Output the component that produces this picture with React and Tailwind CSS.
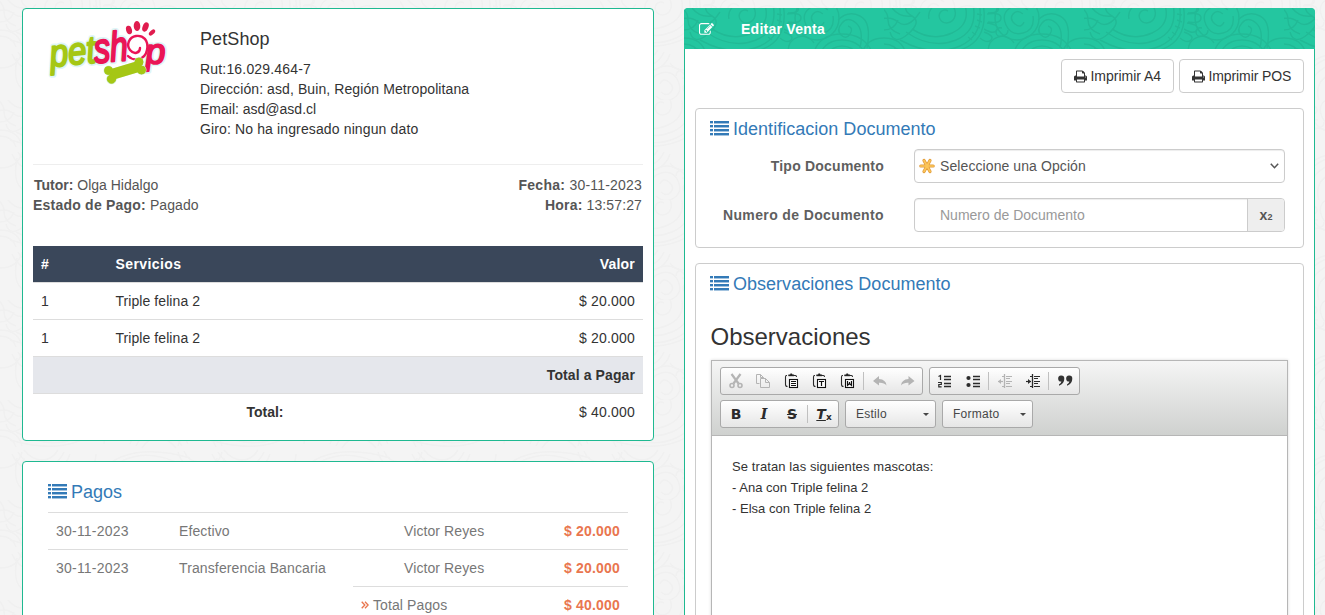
import React from "react";

/* ---------- background ornament ---------- */
const SPIRAL = "M4-3c-5-3-11 2-8 8s13 5 15-3-5-15-13-14-15 9-13 17";

function OrnamentTile() {
  return (
    <>
      {/* large scroll with banded outer rings */}
      <path d={SPIRAL} transform="translate(60 6)" />
      <path d="M80-6q8 22-12 31t-40-4M88-8q8 30-16 40T22 24M94-10q9 36-18 48T16 32M98-10q9 40-19 51T10 40" />
      <path d="M93 6l5 1M93 12l5 2M91 18l5 2M88 24l4 3M84 29l4 3" />
      {/* petals */}
      <path d="M102-2q10-3 12 2t-10 5M103 6q14-2 14 4t-13 4M103 15q13 2 10 7t-13-1M100 24q11 4 7 8t-11-2" />
      {/* double scroll */}
      <circle cx="133" cy="10" r="22" />
      <path d="M144 2q-9-8-18-2t-4 17 17 8 10-17M139 6q-6-5-10 0t2 10 9-2" />
      {/* small scrolls and arches */}
      <path d="M176 40q4-18-4-25t-14 0-1 12 9-1-2-8M183 40q5-26-7-32t-22 4" />
      <path d="M118 20q-6-1-6 4t6 4 6-6M104 44q0-12 10-15t16 6" />
      <path d="M130 44q6-18 28-18t30 18M136 46q6-14 22-14t24 14M142 48q6-10 16-10t18 10" />
      <path d="M-22 46q4-16 22-16t22 16M-16 47q4-11 16-11t16 11M178 46q4-16 22-16t22 16" />
      {/* knot */}
      <path d="M-6-2q10 4 10 14t12 14M24-4q-6 6 4 12t-4 18-18-2M-8 14q12-8 22 0t22-10M8 0q8 10 20 8M0 22q10 0 14-10" />
    </>
  );
}

function Ornament({ id, stroke, width, rotated, className }) {
  return (
    <svg className={className} width="100%" height="100%" aria-hidden="true">
      <defs>
        <pattern id={id} width="200" height={rotated ? 100 : 120} patternUnits="userSpaceOnUse">
          <g fill="none" stroke={stroke} strokeWidth={width}>
            <OrnamentTile />
            {rotated && <g transform="translate(200 98) rotate(180)"><OrnamentTile /></g>}
          </g>
        </pattern>
      </defs>
      <rect width="100%" height="100%" fill={`url(#${id})`} />
    </svg>
  );
}

/* ---------- icons ---------- */
const ListIcon = () => (
  <svg width="19" height="15" viewBox="0 0 19 15" fill="currentColor" shapeRendering="crispEdges" className="-mt-[2px] shrink-0">
    {[0, 4, 8, 12].map((y) => (
      <g key={y}>
        <rect x="0" y={y} width="3" height="2" />
        <rect x="4" y={y} width="15" height="2" />
        <rect x="0" y={y + 2} width="3" height="1" opacity=".35" />
        <rect x="4" y={y + 2} width="15" height="1" opacity=".45" />
      </g>
    ))}
  </svg>
);

const PrintIcon = () => (
  <svg width="13" height="13" viewBox="64 64 1664 1664" fill="currentColor">
    <path d="M448 1536h896v-256h-896v256zm0-640h896v-384h-160q-40 0-68-28t-28-68v-160h-640v640zm1152 64q0-26-19-45t-45-19-45 19-19 45 19 45 45 19 45-19 19-45zm128 0v416q0 13-9.5 22.5t-22.5 9.5h-224v160q0 40-28 68t-68 28h-960q-40 0-68-28t-28-68v-160h-224q-13 0-22.5-9.5t-9.5-22.5v-416q0-79 56.5-135.5t135.5-56.5h64v-544q0-40 28-68t68-28h672q40 0 88 20t76 48l152 152q28 28 48 76t20 88v256h64q79 0 135.5 56.5t56.5 135.5z" />
  </svg>
);

const EditIcon = () => (
  <svg width="15" height="15" viewBox="0 0 1792 1792" fill="currentColor">
    <path d="M888 1184l116-116-152-152-116 116v56h96v96h56zm440-720q-16-16-33 1l-350 350q-17 17-1 33t33-1l350-350q17-17 1-33zm80 594v190q0 119-84.5 203.5t-203.5 84.5h-832q-119 0-203.5-84.5t-84.5-203.5v-832q0-119 84.5-203.5t203.5-84.5h832q63 0 117 25 15 7 18 23 3 17-9 29l-49 49q-14 14-32 8-23-6-45-6h-832q-66 0-113 47t-47 113v832q0 66 47 113t113 47h832q66 0 113-47t47-113v-126q0-13 9-22l64-64q15-15 35-7t20 29zm-96-738l288 288-672 672h-288v-288zm444 132l-92 92-288-288 92-92q28-28 68-28t68 28l152 152q28 28 28 68t-28 68z" />
  </svg>
);

const LogoWord = ({ pet, shop }) => (
  <>
    <text transform="translate(7 53) rotate(-6) scale(1 1.2)" fontSize="32" textLength="46" lengthAdjust="spacingAndGlyphs" fill={pet} stroke={pet}>pet</text>
    <text transform="translate(51 49) rotate(-5) scale(1 1.3)" fontSize="32" textLength="34" lengthAdjust="spacingAndGlyphs" fill={shop} stroke={shop}>sh</text>
    <text transform="translate(102 50) rotate(-3) scale(1 1.1)" fontSize="32" textLength="20" lengthAdjust="spacingAndGlyphs" fill={shop} stroke={shop}>p</text>
  </>
);

const BoneShape = () => (
  <>
    <path d="M66 61L96 52" strokeWidth="11" />
    <circle cx="64.500" cy="56.500" r="4" />
    <circle cx="67.500" cy="65" r="4.200" />
    <circle cx="95" cy="48" r="4" />
    <circle cx="97.500" cy="56" r="4" />
  </>
);

const Logo = () => (
  <svg width="134" height="78" viewBox="0 0 134 78" className="shrink-0">
    <g fontFamily="Liberation Sans, sans-serif" fontStyle="italic" strokeLinejoin="round">
      <g strokeWidth="4.500" opacity=".6"><LogoWord pet="#c9f1f3" shop="#c9f1f3" /></g>
      <g strokeWidth="1.700"><LogoWord pet="#a5c715" shop="#ea1556" /></g>
    </g>
    <path d="M84 42c6 6 17 4 19-6s-4-15-11-14-10 9-6 14 10 3 10-2" fill="none" stroke="#ea1556" strokeWidth="2.400" strokeLinecap="round" />
    <g fill="#e01c4e">
      <ellipse cx="85" cy="16" rx="2.900" ry="4.300" transform="rotate(-16 85 16)" />
      <ellipse cx="93" cy="12" rx="3.300" ry="5" transform="rotate(-4 93 12)" />
      <ellipse cx="101.500" cy="13" rx="2.900" ry="4.800" transform="rotate(22 101.500 13)" />
      <ellipse cx="108" cy="18.500" rx="2.100" ry="3.800" transform="rotate(48 108 18.500)" />
    </g>
    <g fill="#d3f1dc" stroke="#d3f1dc" strokeWidth="2"><BoneShape /></g>
    <g fill="#a5c715" stroke="#a5c715" strokeWidth="1"><BoneShape /></g>
  </svg>
);

const StarIcon = () => (
  <svg width="16" height="16" viewBox="0 0 16 16" className="shrink-0">
    <g strokeLinecap="round">
      <path d="M8 8L5 2.500M8 8L11 2.500M8 8H1.800M8 8H14.200M8 8L5 13.500M8 8L11 13.500" stroke="#e09a3a" strokeWidth="3.200" />
      <path d="M8 8L5 2.500M8 8L11 2.500M8 8H1.800M8 8H14.200M8 8L5 13.500M8 8L11 13.500" stroke="#fcc658" strokeWidth="1.700" />
    </g>
  </svg>
);

/* toolbar glyphs, all on a 16px grid */
const Icon = ({ children, dim, fill = "none" }) => (
  <span className="flex h-[26px] w-[28px] items-center justify-center">
    <svg width="16" height="16" viewBox="0 0 16 16" fill={fill} stroke={dim ? "#b4b4b4" : "#2b2b2b"} strokeWidth="1.200">
      {children}
    </svg>
  </span>
);
const Sep = () => <span className="mr-[2px] ml-px h-[18px] w-px bg-[#c0c0c0]" />;

const Cut = () => (
  <Icon dim>
    <path d="M3.500 1L10.500 10.500M12.500 1L5.500 10.500" strokeWidth="2.200" />
    <circle cx="4" cy="12.500" r="2" strokeWidth="1.600" />
    <circle cx="12" cy="12.500" r="2" strokeWidth="1.600" />
  </Icon>
);
const Copy = () => (
  <Icon dim>
    <g transform="translate(-2 0)">
      <path d="M5.500 10.500H2.500V1.500H6.500L9.500 4.500V5.500M6.500 1.500V4.500H9.500M6.500 5.500H11.500L15.500 9.500V14.500H6.500ZM11.500 5.500V9.500H15.500" strokeWidth="1" />
    </g>
  </Icon>
);
const Clip = ({ children }) => (
  <Icon>
    <g transform="translate(-1 0)">
      <path d="M4 2.500H3.500Q2.500 2.500 2.500 4V11.500Q2.500 13.500 4.500 13.500M11 2.500H12.500Q13.500 2.500 13.500 4" strokeWidth="1.100" />
      <path d="M5.500 3V1.800H7L7.500 .8H9L9.500 1.800H11V3Z" fill="#222" strokeWidth=".4" />
      <rect x="6.500" y="6.500" width="8" height="8" fill="#fff" stroke="#111" strokeWidth="1.100" />
      {children}
    </g>
  </Icon>
);
const Undo = ({ flip }) => (
  <Icon dim fill="#b4b4b4">
    <path d="M1 8L7 3V6Q14 6.500 14.500 12.500Q12 9.500 7 9.800V12.500Z" stroke="none" transform={flip ? "translate(15.500 0) scale(-1 1)" : undefined} />
  </Icon>
);
const Numbered = () => (
  <Icon>
    <path d="M7 3.500H14M7 6.500H14M7 10.500H14M7 13.500H14" strokeWidth="1.300" />
    <path d="M1.500 3.500L3.500 2.500V7M1 9.500H4.300V11.500H1.800V13.800H4.600" />
  </Icon>
);
const Bulleted = () => (
  <Icon>
    <path d="M8 3.500H15M8 6.500H15M8 10.500H15M8 13.500H15" strokeWidth="1.300" />
    <circle cx="3.500" cy="5" r="2.100" fill="#2b2b2b" stroke="none" />
    <circle cx="3.500" cy="12" r="2.100" fill="#2b2b2b" stroke="none" />
  </Icon>
);
const Indent = ({ out }) => (
  <Icon dim={out}>
    <path d="M7.500 1V15" strokeWidth="1.300" />
    <path d="M9 3.500H15M9 5.500H13M9 8.500H15M9 10.500H13M9 13.500H15" />
    <path d="M5 3.500H7M5 13.500H7" />
    <path d="M1 8.500H6" />
    <path d={out ? "M4 6L1 8.500L4 11Z" : "M3 6L6 8.500L3 11Z"} fill={out ? "#b4b4b4" : "#2b2b2b"} stroke="none" />
  </Icon>
);
const Quote = () => (
  <Icon fill="#333">
    <path d="M4 2.500a3.200 3.200 0 0 1 3.300 3.300q0 5-5.300 7v-1.300q2.300-1.300 2.400-2.900A3 3 0 0 1 4 2.500zM12 2.500a3.200 3.200 0 0 1 3.300 3.300q0 5-5.300 7v-1.300q2.300-1.300 2.400-2.900A3 3 0 0 1 12 2.500z" stroke="none" />
  </Icon>
);

const ToolGroup = ({ children }) => (
  <div className="flex h-[28px] items-center rounded-[3px] border border-[#a9a9a9] bg-linear-to-b from-white to-[#e6e6e6] pl-[1px]">{children}</div>
);
const Combo = ({ children }) => (
  <div className="flex h-[28px] w-[91px] items-center justify-between rounded-[3px] border border-[#a9a9a9] bg-linear-to-b from-white to-[#e6e6e6] pr-[6px] pl-[10px] text-[12px] tracking-[.25px] text-[#474747]">
    {children}
    <svg width="6" height="3" viewBox="0 0 6 3" fill="#474747"><path d="M0 0h6L3 3z" /></svg>
  </div>
);

/* ---------- pieces ---------- */
const SectionTitle = ({ children }) => (
  <h4 className="flex h-[20px] items-center gap-[4px] text-[18px] leading-[20px] text-[#337ab7]">
    <ListIcon />
    <span className="tracking-[.02px]">{children}</span>
  </h4>
);

const PrintButton = ({ children, className }) => (
  <button className={`flex h-[34px] items-center gap-[3.500px] rounded-[4px] border border-[#ccc] bg-white pl-[12px] text-[14px] text-[#333] ${className}`}>
    <PrintIcon />
    {children}
  </button>
);

const services = [
  ["1", "Triple felina 2", "$ 20.000"],
  ["1", "Triple felina 2", "$ 20.000"],
];
const payments = [
  ["30-11-2023", "Efectivo", "Victor Reyes", "$ 20.000"],
  ["30-11-2023", "Transferencia Bancaria", "Victor Reyes", "$ 20.000"],
];

function Receipt() {
  return (
    <section className="h-[433px] rounded-[4px] border border-[#1fb991] bg-white px-[10px]">
      <header className="flex h-[156px] border-b border-[#eee] text-[#333]">
        <div className="w-[167px] pt-[5px] pl-[11px]"><Logo /></div>
        <div className="pt-[20px] text-[14px] leading-[20px] tracking-[.09px]">
          <h4 className="mb-[10px] text-[18px] leading-[20px]">PetShop</h4>
          <p className="tracking-[.18px]">Rut:16.029.464-7</p>
          <p>Dirección: asd, Buin, Región Metropolitana</p>
          <p className="tracking-[0]">Email: asd@asd.cl</p>
          <p className="tracking-[.13px]">Giro: No ha ingresado ningun dato</p>
        </div>
      </header>
      <div className="flex h-[81px] justify-between pt-[10px] pr-[1px] text-[14px] leading-[20px] text-[#555]">
        <div>
          <p className="pl-px"><b>Tutor:</b> Olga Hidalgo</p>
          <p className="tracking-[.08px]"><b className="tracking-[.22px]">Estado de Pago:</b> Pagado</p>
        </div>
        <div className="text-right">
          <p className="tracking-[.2px]"><b className="tracking-[.3px]">Fecha:</b> 30-11-2023</p>
          <p className="tracking-[.12px]"><b className="tracking-[.2px]">Hora:</b> 13:57:27</p>
        </div>
      </div>
      <div className="text-[14px] leading-[20px] text-[#333]">
        <div className="flex h-[36px] items-center bg-[#3a475a] px-[8px] font-bold text-white">
          <span className="w-[74.500px]">#</span>
          <span className="flex-1 tracking-[.4px]">Servicios</span>
          <span className="tracking-[.2px]">Valor</span>
        </div>
        {services.map((row, i) => (
          <div key={i} className="flex h-[37px] items-center border-t border-[#ddd] px-[8px]">
            <span className="w-[74.500px]">{row[0]}</span>
            <span className="flex-1 tracking-[.07px]">{row[1]}</span>
            <span className="tracking-[.2px]">{row[2]}</span>
          </div>
        ))}
        <div className="flex h-[37px] items-center justify-end border-t border-[#ddd] bg-[#e5e7ec] px-[8px] font-bold tracking-[.1px]">Total a Pagar</div>
        <div className="flex h-[37px] items-center justify-between border-t border-[#ddd] pr-[8px]">
          <b className="w-[250.500px] text-right">Total:</b>
          <span className="tracking-[.2px]">$ 40.000</span>
        </div>
      </div>
    </section>
  );
}

function Payments() {
  return (
    <section className="h-[200px] shrink-0 rounded-[4px] border border-[#1fb991] bg-white px-[25px] pt-[20px]">
      <SectionTitle>Pagos</SectionTitle>
      <div className="mt-[10px] text-[14px] leading-[20px] text-[#777]">
        {payments.map((p, i) => (
          <div key={i} className="flex h-[37px] items-center border-t border-[#ddd] px-[8px]">
            <span className="w-[123px] tracking-[.22px]">{p[0]}</span>
            <span className="w-[225px] tracking-[.12px]">{p[1]}</span>
            <span className="flex-1 tracking-[.1px]">{p[2]}</span>
            <b className="tracking-[.2px] text-[#e9764f]">{p[3]}</b>
          </div>
        ))}
        <div className="ml-[305px] flex h-[37px] items-center border-t border-[#ddd] px-[8px]">
          <svg width="8" height="8" viewBox="0 0 9 9" fill="none" stroke="#e9764f" strokeWidth="1.500" className="mr-[4px]">
            <path d="M.8 .8L4.300 4.500L.8 8.200M4.500 .8L8 4.500L4.500 8.200" />
          </svg>
          <span className="flex-1 tracking-[.1px]">Total Pagos</span>
          <b className="tracking-[.2px] text-[#e9764f]">$ 40.000</b>
        </div>
      </div>
    </section>
  );
}

function Editor() {
  return (
    <div className="mx-px h-[300px] border border-[#b6b6b6] bg-white shadow-[0_0_3px_rgba(0,0,0,.15)]">
      <div className="flex h-[75px] flex-col gap-[5px] border-b border-[#b6b6b6] bg-linear-to-b from-[#f5f5f5] to-[#cfd1cf] pt-[6px] pl-[8px]">
        <div className="flex gap-[6px]">
          <ToolGroup>
            <Cut />
            <Copy />
            <Clip><path d="M8 8.500H13M8 10.500H13M8 12.500H13" stroke="#111" strokeWidth="1" /></Clip>
            <Clip><path d="M8 8.500H13M10.500 8.500V13" stroke="#111" strokeWidth="1.200" /></Clip>
            <Clip><path d="M8.500 8V12.300L10.500 10.500L12.500 12.300V8M10.500 9V11" stroke="#111" strokeWidth="1.200" /></Clip>
            <Sep />
            <Undo />
            <Undo flip />
          </ToolGroup>
          <ToolGroup>
            <Numbered />
            <Bulleted />
            <Sep />
            <Indent out />
            <Indent />
            <Sep />
            <Quote />
          </ToolGroup>
        </div>
        <div className="flex gap-[6px] text-[#2b2b2b]">
          <ToolGroup>
            <span className="w-[28px] text-center font-['DejaVu_Sans',sans-serif] text-[14px] font-bold">B</span>
            <span className="w-[28px] text-center font-['DejaVu_Serif',serif] text-[14px] font-bold italic">I</span>
            <span className="w-[28px] text-center font-['DejaVu_Sans',sans-serif] text-[14px] font-bold line-through">S</span>
            <Sep />
            <span className="flex w-[28px] items-center justify-center font-['DejaVu_Sans',sans-serif] text-[14px] font-bold">
              <i className="underline">T</i>
              <span className="pt-[7px] text-[9px]">x</span>
            </span>
          </ToolGroup>
          <Combo>Estilo</Combo>
          <Combo>Formato</Combo>
        </div>
      </div>
      <div className="px-[20px] pt-[20px] text-[13px] leading-[21px] tracking-[.1px] text-[#333]">
        <p>Se tratan las siguientes mascotas:</p>
        <p className="tracking-[.02px]">- Ana con Triple felina 2</p>
        <p className="tracking-[.02px]">- Elsa con Triple felina 2</p>
      </div>
    </div>
  );
}

function SalePanel() {
  return (
    <section className="mt-[8px] h-[640px] w-[631px] rounded-[4px] border border-[#1fb991] bg-white">
      <header className="relative -mx-px -mt-px h-[41px] overflow-hidden rounded-t-[4px] bg-[#24c6a0] text-white">
        <Ornament id="bar" stroke="#21ba96" width={1.500} className="absolute inset-0" />
        <div className="relative flex h-full items-center pt-px pl-[15px]">
          <span className="w-[42px]"><EditIcon /></span>
          <b className="text-[14px] tracking-[.25px]">Editar Venta</b>
        </div>
      </header>
      <div className="px-[10px] pt-[10px]">
        <div className="flex justify-end gap-[5px]">
          <PrintButton className="w-[113px] tracking-[-.02px]">Imprimir A4</PrintButton>
          <PrintButton className="w-[125px] tracking-[-.1px]">Imprimir POS</PrintButton>
        </div>
        <div className="mt-[15px] h-[140px] rounded-[4px] border border-[#ccc] px-[14px] pt-[10px]">
          <SectionTitle>Identificacion Documento</SectionTitle>
          <div className="mt-[10px] flex h-[34px] items-center text-[14px]">
            <b className="w-[174px] text-right tracking-[.22px] text-[#5f5f5f]">Tipo Documento</b>
            <div className="ml-[30px] flex h-[34px] w-[371px] items-center rounded-[4px] border border-[#ccc] pr-[5px] pl-[4px] text-[#555] shadow-[inset_0_1px_1px_rgba(0,0,0,.075)]">
              <StarIcon />
              <span className="ml-[5px] flex-1 tracking-[.09px]">Seleccione una Opción</span>
              <svg width="9" height="6" viewBox="0 0 9 6" fill="none" stroke="#555" strokeWidth="1.500"><path d="M.8 .8L4.500 4.700L8.200 .8" /></svg>
            </div>
          </div>
          <div className="mt-[15px] flex h-[34px] items-center text-[14px]">
            <b className="w-[174px] text-right tracking-[.37px] text-[#5f5f5f]">Numero de Documento</b>
            <div className="ml-[30px] flex h-[34px] w-[371px] items-center overflow-hidden rounded-[4px] border border-[#ccc] text-[#999] shadow-[inset_0_1px_1px_rgba(0,0,0,.075)]">
              <span className="flex-1 pl-[25px]">Numero de Documento</span>
              <span className="flex h-full w-[37px] items-center justify-center border-l border-[#ccc] bg-[#eee] text-[14px] font-bold text-[#555]">x<span className="pt-[6px] text-[9px]">2</span></span>
            </div>
          </div>
        </div>
        <div className="mt-[15px] h-[420px] rounded-[4px] border border-[#ccc] px-[14px] pt-[10px]">
          <SectionTitle>Observaciones Documento</SectionTitle>
          <h3 className="mt-[30px] mb-[10px] pl-[.5px] text-[24px] leading-[26px] text-[#333]">Observaciones</h3>
          <Editor />
        </div>
      </div>
    </section>
  );
}

export default function App() {
  return (
    <div className="relative h-[615px] w-[1325px] overflow-hidden bg-[#f4f4f4] font-['Liberation_Sans',Arial,sans-serif]">
      <Ornament id="page" stroke="#f0f0f0" width={1.500} rotated className="absolute inset-0" />
      <main className="relative flex gap-[30px] pl-[22px]">
        <div className="mt-[8px] flex w-[632px] flex-col gap-[20px]">
          <Receipt />
          <Payments />
        </div>
        <SalePanel />
      </main>
    </div>
  );
}
